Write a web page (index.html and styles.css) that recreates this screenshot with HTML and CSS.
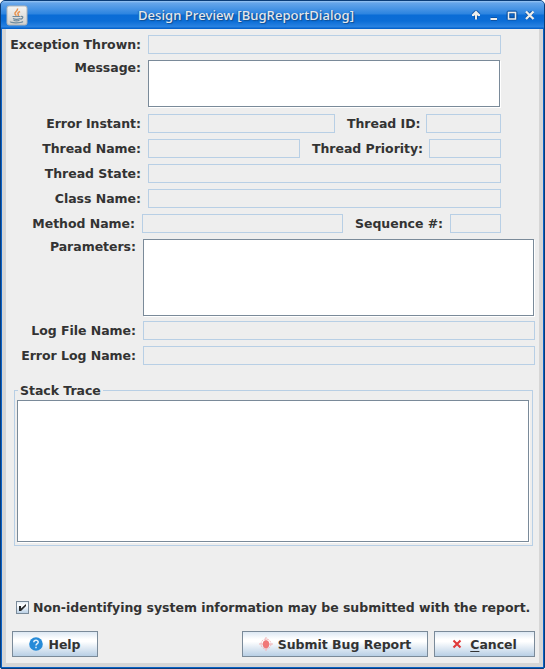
FILE: index.html
```html
<!DOCTYPE html>
<html lang="en">
<head>
<meta charset="utf-8">
<title>Design Preview [BugReportDialog]</title>
<link rel="stylesheet" href="styles.css">
</head>
<body>
<div class="window">
  <header class="titlebar">
    <svg class="app-icon" width="22" height="21" viewBox="0 0 22 21">
      <defs><linearGradient id="g" x1="0" y1="0" x2="0" y2="1"><stop offset="0" stop-color="#f4f4f2"/><stop offset="1" stop-color="#cfcfcd"/></linearGradient></defs>
      <rect x="1" y="1" width="20" height="19" rx="2" fill="url(#g)" stroke="#aeb4b9"/>
      <path d="M11.500 3.500c.8 2.500-3.500 3.500-2.500 5.500.3.700 1 1 1.200 1.700M14 6.500c-1.500.8-2.800 1.800-1.800 2.900.5.700.2 1.200-.3 1.600" fill="none" stroke="#e8924e" stroke-width="1.500"/>
      <path d="M6.500 11.500h8M7 13.500c2 1 5 1 7.500 0M7.500 15.300c2 .8 4 .8 6 0M15 11.500c2.500-.7 2.500 2-.5 2.800M4.500 16.500c-1 1.500 10 2 12.500 0" fill="none" stroke="#6f8b9e" stroke-width="1.200"/>
    </svg>
    <h1 class="title">Design Preview [BugReportDialog]</h1>
    <svg class="controls" width="66" height="14" viewBox="0 0 66 14">
      <g fill="none" stroke="#0b4a93" stroke-opacity=".75" stroke-width="4" stroke-linejoin="round">
        <path d="M5 11V5M2 7l3-3 3 3M20 11h6M37.500 4.500h7v6h-7zM55.500 4l6 6.500M61.500 4l-6 6.500"/>
      </g>
      <path d="M5 2.500L9 6.500v1.500H7L6 7v4.500H4V7L3 8H1V6.500zM19.500 10h6.500v2h-6.500z" fill="#eeeeec"/>
      <g fill="none" stroke="#eeeeec">
        <path d="M37.500 4.500h7v6.500h-7z" stroke-width="1.500"/>
        <path d="M55 3.500l7.500 7.500M62.500 3.500L55 11" stroke-width="2.300"/>
      </g>
    </svg>
  </header>
  <main class="dialog">
    <section class="form">
      <div class="row narrow"><label class="lead">Exception Thrown:</label><div class="field"></div></div>
      <div class="row narrow message"><label class="lead">Message:</label><div class="area"></div></div>
      <div class="row narrow"><label class="lead">Error Instant:</label><div class="field"></div><label class="second thread-id">Thread ID:</label><div class="field id-field"></div></div>
      <div class="row narrow"><label class="lead">Thread Name:</label><div class="field"></div><label class="second priority">Thread Priority:</label><div class="field priority-field"></div></div>
      <div class="row narrow"><label class="lead">Thread State:</label><div class="field"></div></div>
      <div class="row narrow"><label class="lead">Class Name:</label><div class="field"></div></div>
      <div class="row narrow"><label class="lead method">Method Name:</label><div class="field"></div><label class="second sequence">Sequence #:</label><div class="field seq-field"></div></div>
      <div class="row parameters"><label class="lead log">Parameters:</label><div class="area"></div></div>
      <div class="row"><label class="lead log">Log File Name:</label><div class="field"></div></div>
      <div class="row"><label class="lead log">Error Log Name:</label><div class="field"></div></div>
    </section>
    <fieldset class="trace"><legend>Stack Trace</legend><div class="area"></div></fieldset>
    <label class="consent">
      <svg width="13" height="13" viewBox="0 0 13 13">
        <defs><linearGradient id="c" x1="0" y1="0" x2="0" y2="1"><stop offset="0" stop-color="#dfe9f2"/><stop offset=".3" stop-color="#fff"/><stop offset="1" stop-color="#b8cfe5"/></linearGradient></defs>
        <rect x=".5" y=".5" width="12" height="12" fill="url(#c)" stroke="#7a8a99"/>
        <path d="M3 5h2v2.500L10 3v2L5 10H3z" fill="#262626"/>
      </svg>
      <span>Non-identifying system information may be submitted with the report.</span>
    </label>
    <footer class="buttons">
      <button class="btn help">
        <svg width="14" height="14" viewBox="0 0 14 14"><circle cx="7" cy="7" r="6.800" fill="#268bd8"/><path d="M4.800 5.200C4.900 2.700 9.200 2.700 9.200 5.200 9.200 6.700 7 6.700 7 8.500M7 9.700v1.500" fill="none" stroke="#e4f1fb" stroke-width="1.500"/></svg>
        <span>Help</span>
      </button>
      <button class="btn submit">
        <svg width="14" height="14" viewBox="0 0 14 14"><g fill="none" stroke="#f2b5b8"><circle cx="7" cy="7" r="5" stroke-dasharray="2 1"/><path d="M7 0v14M0 7h14"/></g><ellipse cx="7" cy="7.300" rx="3.200" ry="4" fill="#f07878"/></svg>
        <span>Submit Bug Report</span>
      </button>
      <button class="btn cancel">
        <svg width="10" height="10" viewBox="0 0 10 10"><path d="M1.500 1.500l7 7M8.500 1.500l-7 7" stroke="#e03a3a" stroke-width="2.100" fill="none"/></svg>
        <span><u>C</u>ancel</span>
      </button>
    </footer>
  </main>
</div>
</body>
</html>
```
FILE: styles.css
```css
* { box-sizing: border-box; }
body {
  margin: 0;
  background: #fff;
  color: #333;
  font: bold 12.5px/15px "DejaVu Sans", sans-serif;
  letter-spacing: -.03px;
}
.window {
  width: 545px;
  height: 669px;
  display: flex;
  flex-direction: column;
  background: #0a60c4;
  border: 1px solid #0a3c78;
  border-radius: 5px 5px 2px 2px;
  overflow: hidden;
}
.titlebar {
  height: 28px;
  flex: none;
  display: flex;
  align-items: center;
  padding: 0 7px 0 5px;
  background: linear-gradient(#9bc6f3 0, #65a5ea 2px, #2c84e0 13px, #0a6cd6 14px, #0c6dd6 20px, #2a83e2 26px, #0763cc 27px);
}
.title {
  flex: 1;
  margin: 0;
  text-align: center;
  white-space: nowrap;
  color: #e6e8ea;
  font: 500 13px/18px "Noto Sans", sans-serif;
  letter-spacing: .08px;
  padding: 0 7px 0 0;
  text-shadow: 1px 1px 1px #114f92, -1px 0 1px #1f69b9;
}
.app-icon { flex: none; }
.controls { flex: none; }
.dialog {
  flex: 1;
  display: flex;
  flex-direction: column;
  margin: 0 1px 1px;
  padding: 6px 4px 5px 6px;
  background: #eee;
  border: solid #d6d6d6;
  border-width: 0 4px 4px;
}
.form {
  display: flex;
  flex-direction: column;
  gap: 6px;
}
.row {
  display: flex;
  height: 19px;
}
.row.narrow { width: 489px; }
.row.message { height: 48px; }
.row.parameters { height: 78px; margin-bottom: -2px; }
.lead {
  display: flex;
  justify-content: flex-end;
  width: 129px;
  margin-right: 7px;
  padding-top: 2px;
  white-space: nowrap;
}
.message .lead, .parameters .lead { padding-top: 0; }
.lead.method { width: 123px; }
.lead.log { width: 124px; }
.second {
  margin: 0 6px 0 12px;
  padding-top: 2px;
  white-space: nowrap;
}
.thread-id { width: 73px; }
.priority { width: 111px; }
.sequence { width: 89px; }
.field {
  flex: 1;
  border: 1px solid #b8cfe5;
}
.id-field { flex: none; width: 75px; }
.priority-field { flex: none; width: 72px; }
.seq-field { flex: none; width: 51px; }
.area {
  flex: 1;
  background: #fff;
  border: 1px solid #7a8a99;
  margin: 0 1px 1px 0;
  box-shadow: 1px 1px #fff;
}
.trace {
  height: 163px;
  width: 519px;
  margin: 18px 0 0 2px;
  padding: 2px;
  border: 1px solid #b8cfe5;
  min-width: 0;
}
.trace legend {
  height: 15px;
  margin-left: 1px;
  padding: 0 2px;
}
.trace .area { height: 142px; width: 512px; }
.consent {
  display: flex;
  align-items: center;
  gap: 4px;
  height: 15px;
  margin: 54px 0 0 4px;
  white-space: nowrap;
}
.consent svg { flex: none; }
.buttons {
  display: flex;
  gap: 6px;
  margin-top: 16px;
}
.btn {
  display: flex;
  align-items: center;
  justify-content: center;
  gap: 5px;
  height: 26px;
  padding: 0;
  color: #333;
  font: inherit;
  letter-spacing: inherit;
  border: 1px solid #7a8a99;
  background: linear-gradient(#dde8f3, #fff 30%, #fff 40%, #b8cfe5);
  white-space: nowrap;
}
.help { width: 86px; margin-right: auto; }
.submit { width: 186px; }
.cancel { width: 101px; gap: 8px; }
.cancel u { text-underline-offset: 2px; }
```
